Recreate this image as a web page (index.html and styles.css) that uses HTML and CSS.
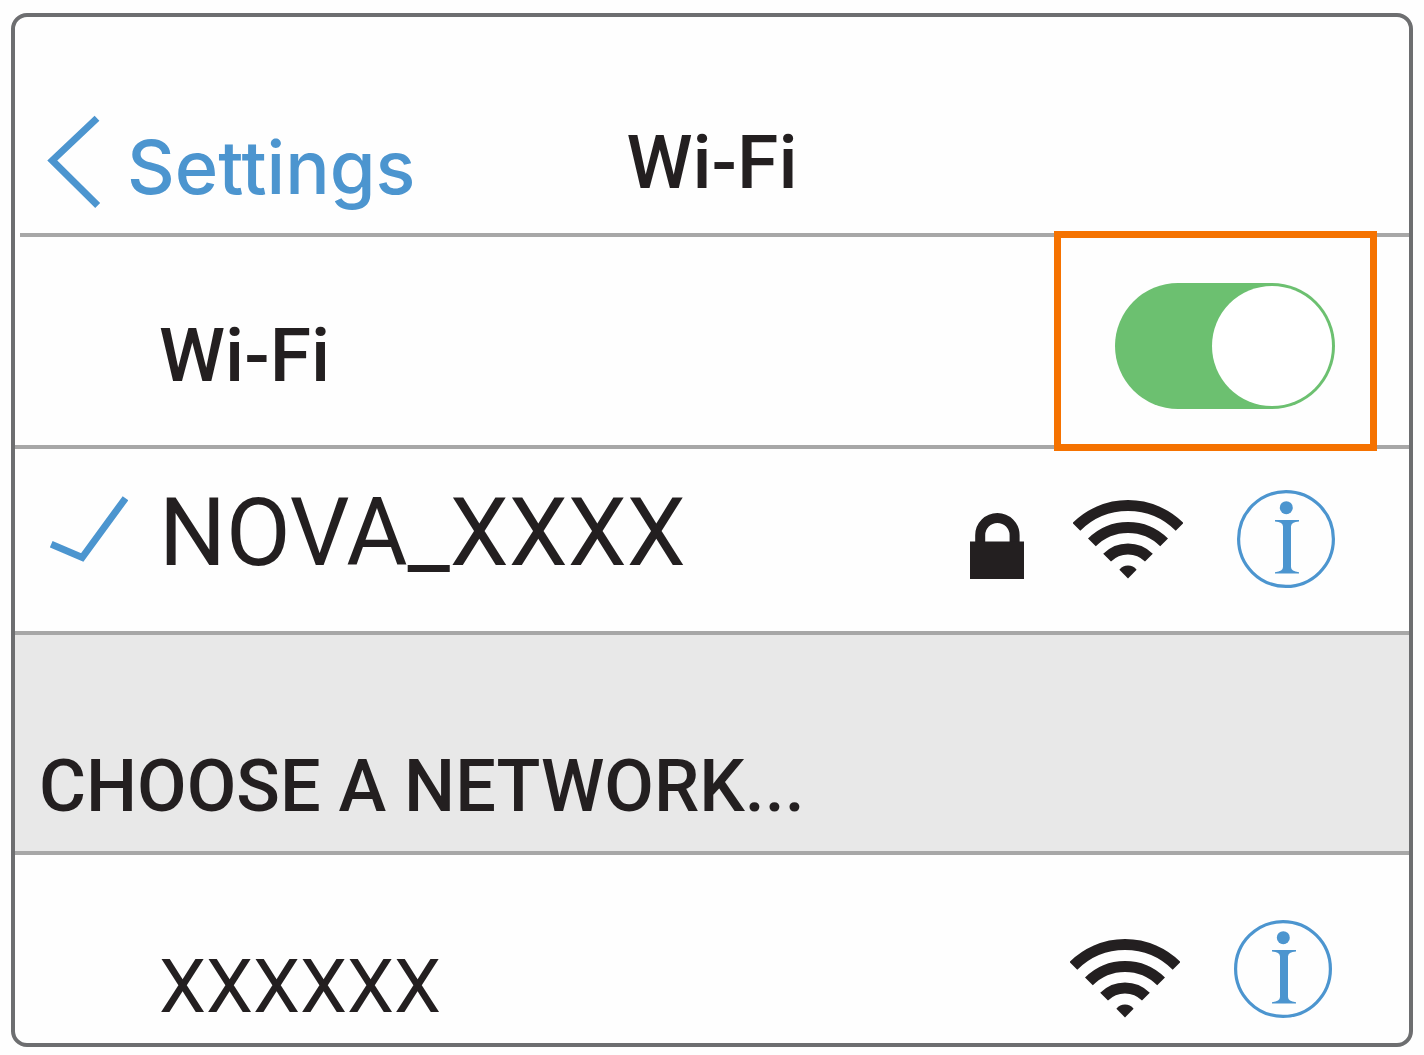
FILE: index.html
```html
<!DOCTYPE html>
<html lang="en">
<head>
  <meta charset="utf-8">
  <meta name="viewport" content="width=device-width, initial-scale=1">
  <title>Wi-Fi</title>
  <link rel="stylesheet" href="styles.css">
</head>
<body>
  <svg class="sprite" aria-hidden="true">
    <symbol id="wifi" viewBox="0 0 110 79">
      <g fill="none" stroke="currentColor" stroke-width="11">
        <path d="M3.4 26.9a73 73 0 0 1 103.2 0"/>
        <path d="M18.9 42.4a51 51 0 0 1 72.2 0"/>
        <path d="M34.1 57.6a29.5 29.5 0 0 1 41.8 0"/>
      </g>
      <path fill="currentColor" d="M55 78.5l-8.6-8.8q3.4-4.2 8.6-4.2t8.6 4.2z"/>
    </symbol>
    <symbol id="info" viewBox="0 0 98 98">
      <circle cx="49" cy="49" r="47.4" fill="none" stroke="currentColor" stroke-width="3.2"/>
      <circle cx="49.3" cy="17.7" r="6.5" fill="currentColor"/>
      <path fill="currentColor" d="M38 30h24v1.500q-8 .5-8 5v40.500q0 4.500 8 5.200v1.300h-24v-1.300q8-.7 8-5.200v-40.500q0-4.500-8-5z"/>
    </symbol>
  </svg>

  <main class="panel">
    <header class="header">
      <a class="back" href="#">
        <svg class="chevron" viewBox="0 0 54 94" aria-hidden="true"><path d="M50 3.200L5.300 45.500 50.700 90.500"/></svg>
        <span class="back-label">Settings</span>
      </a>
      <h1 class="title">Wi-Fi</h1>
    </header>
    <hr class="divider divider-inset">

    <div class="row row-switch">
      <label class="name" for="wifi-switch">Wi-Fi</label>
      <span class="switch-area">
        <input class="switch" type="checkbox" role="switch" id="wifi-switch" checked>
      </span>
    </div>
    <hr class="divider">

    <div class="row row-current">
      <svg class="check" viewBox="0 0 78 66" aria-hidden="true"><path d="M1.200 48.300L32.200 61.500 75.500 2.200"/></svg>
      <span class="name name-current">NOVA_XXXX</span>
      <div class="icons">
        <div class="status">
          <svg class="lock" viewBox="0 0 54 66" role="img" aria-label="Secured">
            <path class="shackle" d="M10.200 32V22.200a17.200 17.200 0 0 1 34.400 0V32"/>
            <path class="lock-body" d="M0 28.500h54V66H0z"/>
          </svg>
          <svg class="wifi" role="img" aria-label="Signal strength"><use href="#wifi"/></svg>
        </div>
        <button class="info" type="button" aria-label="About NOVA_XXXX"><svg class="info-icon"><use href="#info"/></svg></button>
      </div>
    </div>
    <hr class="divider">

    <h2 class="section">CHOOSE A NETWORK...</h2>
    <hr class="divider">

    <div class="row row-network">
      <span class="name">XXXXXX</span>
      <div class="icons icons-low">
        <svg class="wifi" role="img" aria-label="Signal strength"><use href="#wifi"/></svg>
        <button class="info" type="button" aria-label="About XXXXXX"><svg class="info-icon"><use href="#info"/></svg></button>
      </div>
    </div>
  </main>
</body>
</html>
```
FILE: styles.css
```css
:root {
  --ink: #231f20;
  --blue: #4c95cf;
  --green: #6cc070;
  --orange: #f57200;
  --line: #a7a7a7;
  --frame: #6d6e70;
}

*,
*::before,
*::after {
  box-sizing: border-box;
}

body {
  margin: 0;
  padding: 13px 11px 8px;
  background: #fefefe;
  color: var(--ink);
  font-family: Roboto, "Liberation Sans", sans-serif;
  font-size: 75px;
  font-weight: 400;
  line-height: 80px;
}

.sprite {
  position: absolute;
  width: 0;
  height: 0;
}

svg {
  display: block;
}

.panel {
  border: 4px solid var(--frame);
  border-radius: 16px;
  overflow: hidden;
}

.header {
  display: grid;
  grid-template-columns: 1fr auto 1fr;
  align-items: center;
  min-height: 216px;
  padding: 74px 32px 0;
}

.back {
  display: flex;
  align-items: center;
  gap: 26px;
  color: var(--blue);
  font-family: Inter, "Liberation Sans", sans-serif;
  font-size: 74px;
  font-weight: 500;
  text-decoration: none;
}

.back-label {
  padding-top: 10px;
}

.chevron {
  width: 54px;
  height: 94px;
  fill: none;
  stroke: currentColor;
  stroke-width: 7;
}

.title {
  margin: 0;
  font-size: 75px;
  font-weight: 500;
}

.divider {
  height: 4px;
  margin: 0;
  border: 0;
  background: var(--line);
}

.divider-inset {
  margin-left: 5px;
}

.row {
  display: grid;
  grid-template-columns: 109px 1fr auto;
  align-items: center;
  padding: 0 74px 0 35px;
}

.name {
  grid-column: 2;
}

.row-switch {
  position: relative;
  min-height: 208px;
}

.row-switch .name {
  padding-top: 28px;
  font-weight: 500;
}

/* Callout frame that overlaps the dividers above and below the switch */
.row-switch::after {
  content: "";
  position: absolute;
  top: -6px;
  right: 32px;
  bottom: -6px;
  width: 323px;
  border: 7px solid var(--orange);
  pointer-events: none;
}

.switch-area {
  padding-top: 10px;
}

.switch {
  display: flex;
  justify-content: flex-end;
  width: 220px;
  height: 126px;
  margin: 0;
  padding: 3px;
  border-radius: 63px;
  background: var(--green);
  appearance: none;
}

.switch::before {
  content: "";
  width: 120px;
  height: 120px;
  border-radius: 50%;
  background: #fff;
}

.row-current {
  min-height: 182px;
  padding-bottom: 2px;
}

.check {
  width: 78px;
  height: 66px;
  margin-bottom: 20px;
  fill: none;
  stroke: var(--blue);
  stroke-width: 7;
}

.name-current {
  padding-bottom: 12px;
  font-size: 94px;
}

.icons {
  display: flex;
  align-items: center;
  gap: 54px;
}

.icons-low {
  align-items: flex-end;
}

.status {
  display: flex;
  align-items: flex-end;
  gap: 49px;
}

.lock {
  width: 54px;
  height: 66px;
}

.shackle {
  fill: none;
  stroke: currentColor;
  stroke-width: 10;
}

.lock-body {
  fill: currentColor;
}

.wifi {
  width: 110px;
  height: 79px;
}

.info {
  padding: 0;
  border: 0;
  background: none;
  color: var(--blue);
}

.info-icon {
  width: 98px;
  height: 98px;
}

.section {
  min-height: 216px;
  margin: 0;
  padding: 112px 24px 24px;
  background: #e8e8e8;
  font-size: 72px;
  font-weight: 500;
}

.row-network {
  min-height: 188px;
  padding: 40px 77px 0 35px;
}

.row-network .name {
  padding-top: 34px;
}
```
